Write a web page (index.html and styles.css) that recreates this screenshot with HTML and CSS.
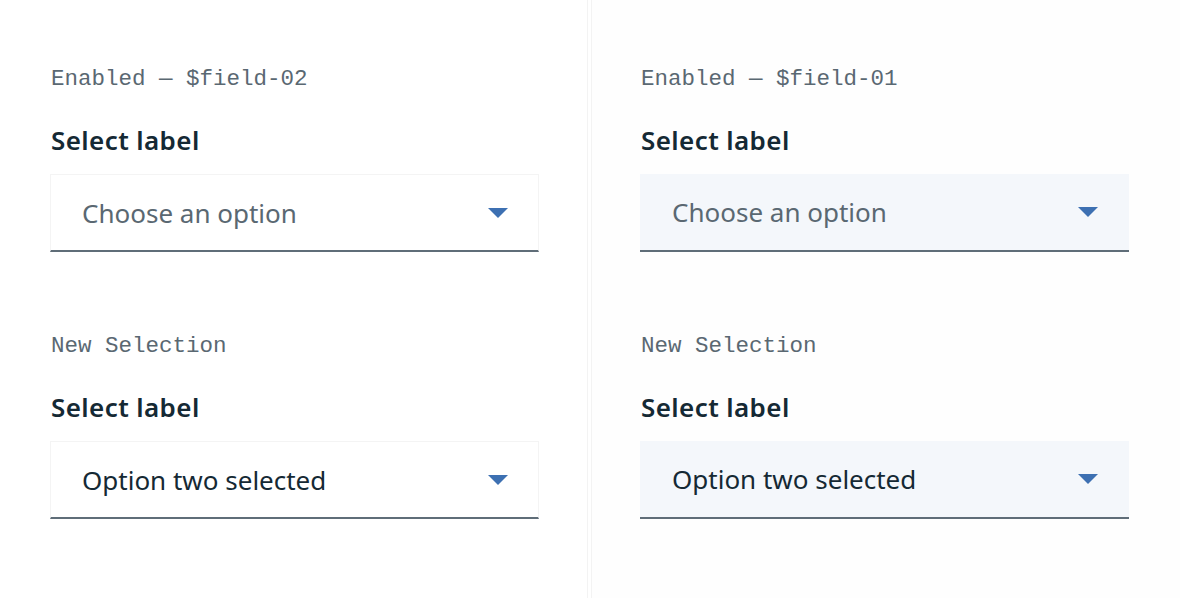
FILE: index.html
```html
<!DOCTYPE html>
<html>
<head>
<meta charset="utf-8">
<link rel="stylesheet" href="styles.css">
</head>
<body>
<div class="page">
  <div class="panel panel-left">
    <div class="block">
      <div class="caption">Enabled — $field-02</div>
      <div class="label">Select label</div>
      <div class="field field-02">
        <span class="value placeholder">Choose an option</span>
        <svg class="arrow" width="20" height="10" viewBox="0 0 20 10"><path d="M0 0H20L10 10Z" fill="#3d70b2"/></svg>
      </div>
    </div>
    <div class="block block-2">
      <div class="caption">New Selection</div>
      <div class="label">Select label</div>
      <div class="field field-02">
        <span class="value">Option two selected</span>
        <svg class="arrow" width="20" height="10" viewBox="0 0 20 10"><path d="M0 0H20L10 10Z" fill="#3d70b2"/></svg>
      </div>
    </div>
  </div>
  <div class="panel panel-right">
    <div class="block">
      <div class="caption">Enabled — $field-01</div>
      <div class="label">Select label</div>
      <div class="field field-01">
        <span class="value placeholder">Choose an option</span>
        <svg class="arrow" width="20" height="10" viewBox="0 0 20 10"><path d="M0 0H20L10 10Z" fill="#3d70b2"/></svg>
      </div>
    </div>
    <div class="block block-2">
      <div class="caption">New Selection</div>
      <div class="label">Select label</div>
      <div class="field field-01">
        <span class="value">Option two selected</span>
        <svg class="arrow" width="20" height="10" viewBox="0 0 20 10"><path d="M0 0H20L10 10Z" fill="#3d70b2"/></svg>
      </div>
    </div>
  </div>
</div>
</body>
</html>
```
FILE: styles.css
```css
html, body {
  margin: 0;
  padding: 0;
  background: #ffffff;
}
.page {
  display: flex;
  width: 1180px;
  height: 598px;
  font-family: "Noto Sans", "Liberation Sans", sans-serif;
}
.panel {
  box-sizing: border-box;
  height: 598px;
  padding-top: 64px;
}
.panel-left {
  width: 588px;
  padding-left: 50px;
  border-right: 1px solid #f3f3f3;
}
.panel-right {
  flex: 1;
  margin-left: 3px;
  padding-left: 48px;
  border-left: 1px solid #f3f3f3;
  background: #fefefe;
}
.block {
  width: 489px;
}
.block-2 {
  margin-top: 79px;
}
.caption {
  font-family: "Liberation Mono", "DejaVu Sans Mono", monospace;
  font-size: 22.5px;
  line-height: 30px;
  height: 30px;
  color: #5a6872;
  padding-left: 1px;
}
.label {
  margin-top: 30px;
  font-size: 26px;
  font-weight: 600;
  letter-spacing: 0.4px;
  line-height: 32px;
  height: 32px;
  color: #152934;
  padding-left: 1px;
}
.field {
  box-sizing: border-box;
  margin-top: 18px;
  height: 78px;
  display: flex;
  align-items: center;
  justify-content: space-between;
  padding: 0 31px 0 32px;
  border-bottom: 2px solid #5f6d78;
}
.field-02 {
  background: #ffffff;
  padding-left: 31px;
  padding-right: 30px;
  border-top: 1px solid #f4f4f4;
  border-left: 1px solid #f4f4f4;
  border-right: 1px solid #f4f4f4;
}
.field-01 {
  background: #f4f7fb;
}
.value {
  font-size: 26px;
  color: #152934;
  line-height: 32px;
}
.value.placeholder {
  color: #5a6872;
}
.arrow {
  display: block;
  flex: none;
}
```
